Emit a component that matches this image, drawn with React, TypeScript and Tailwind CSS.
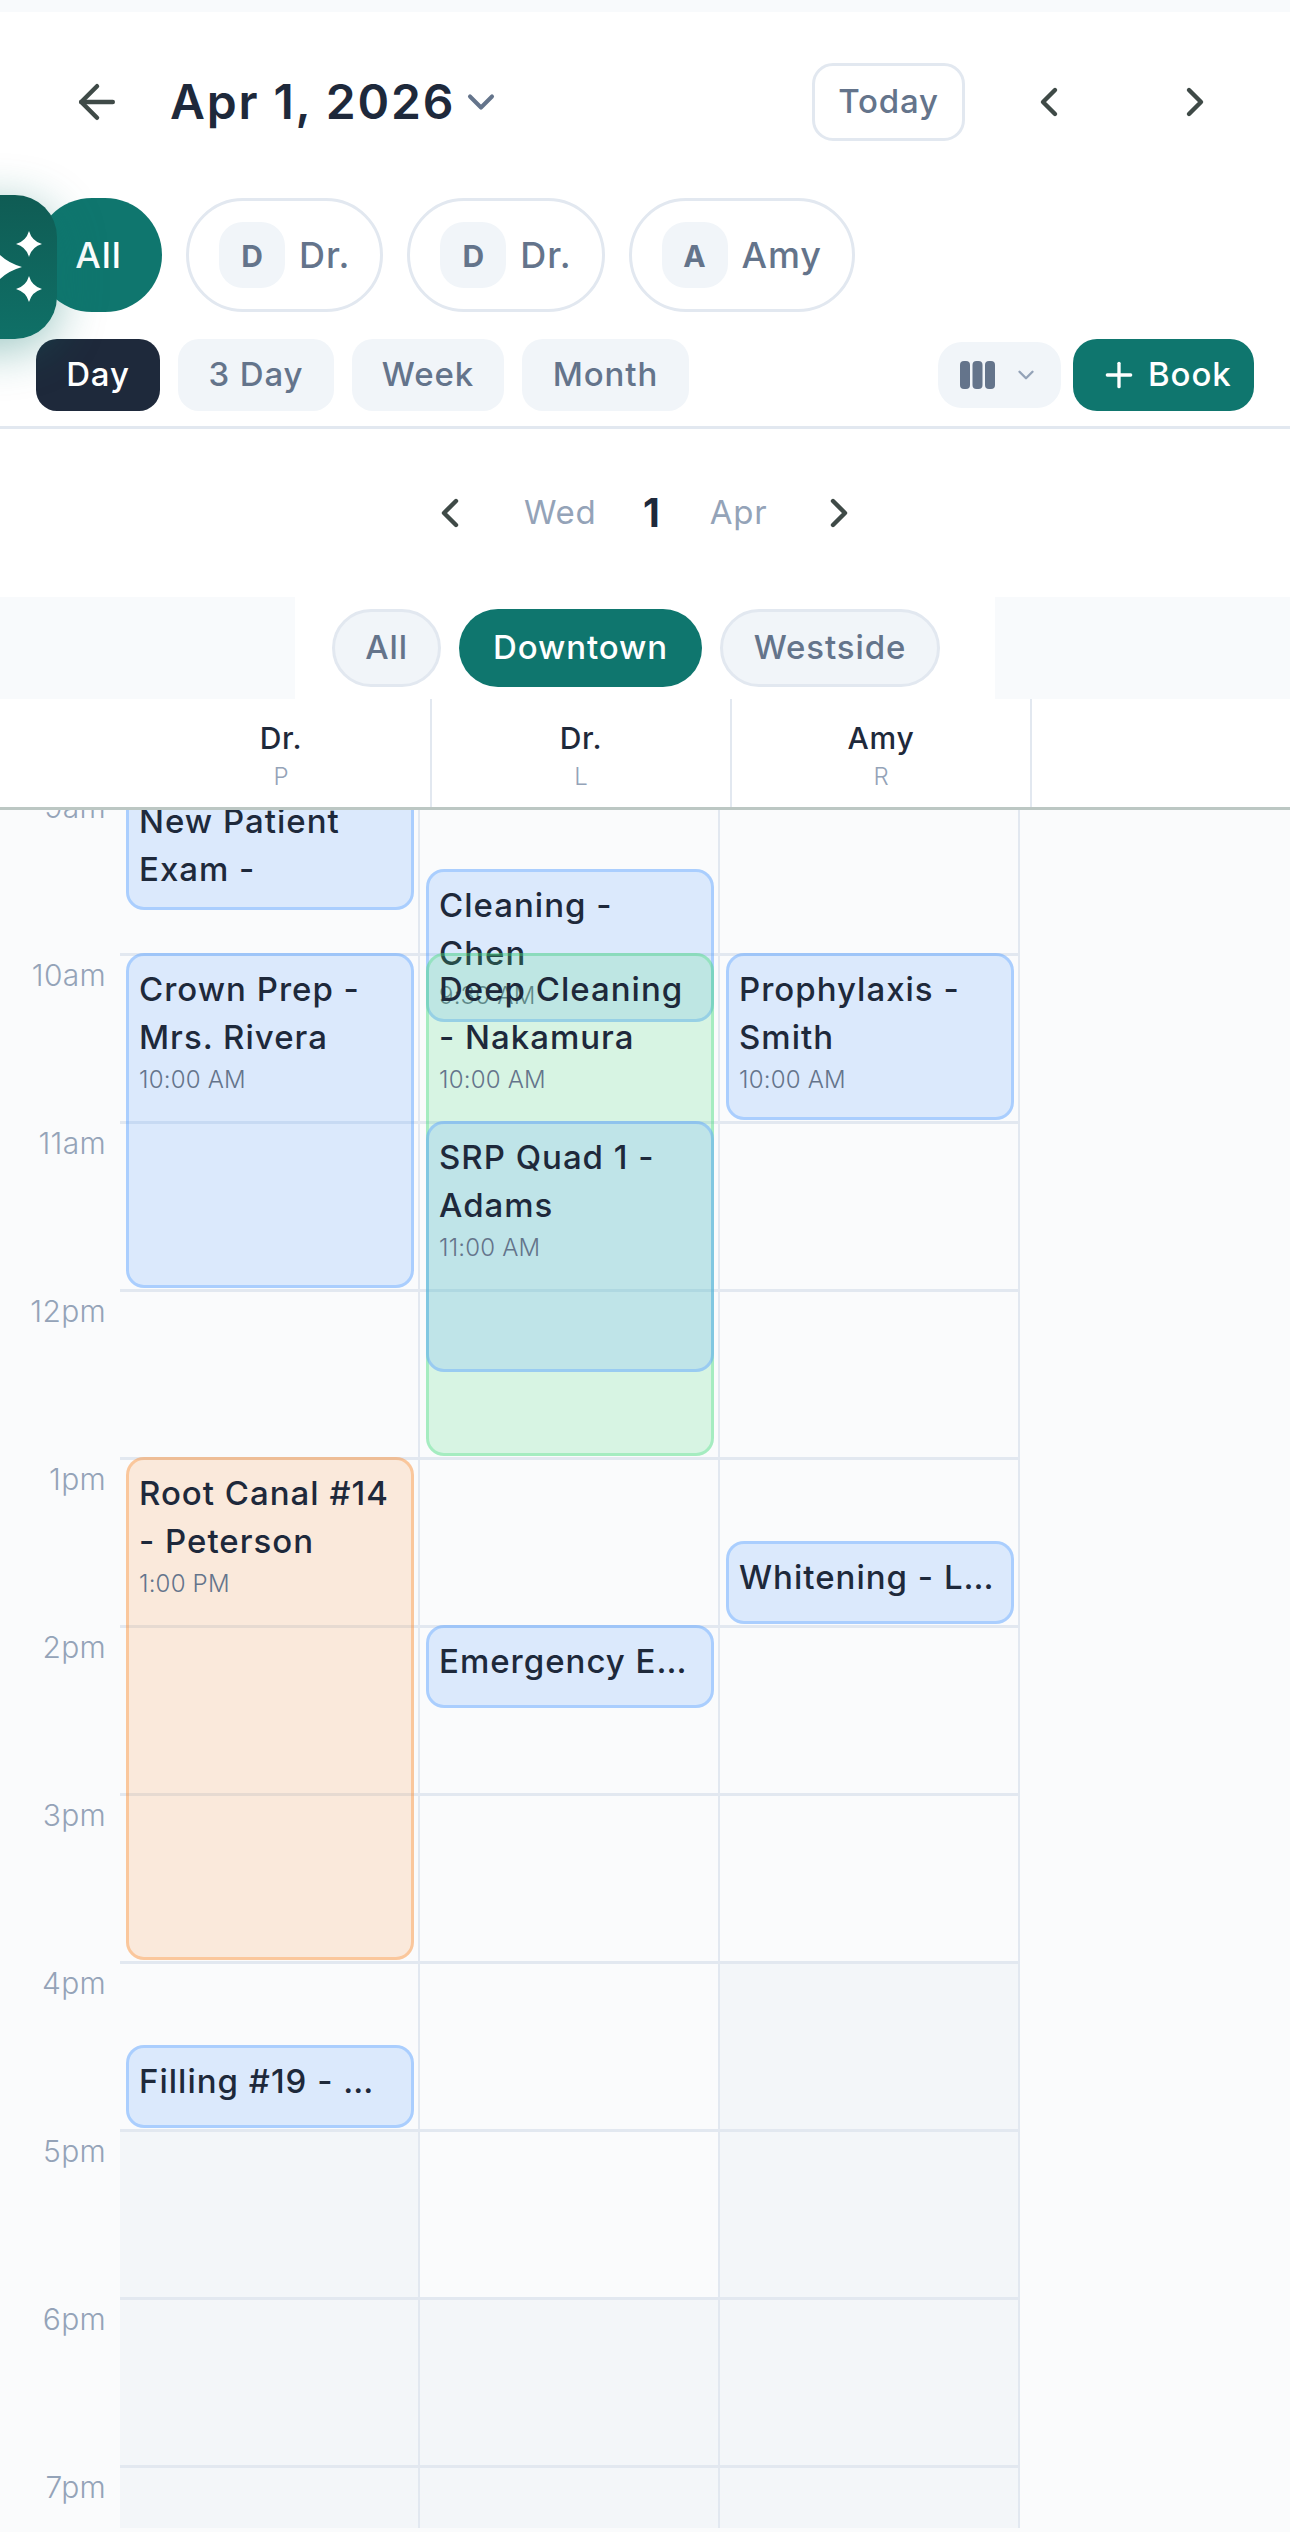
import React from 'react';
import { ArrowLeft, ChevronDown, ChevronLeft, ChevronRight, Plus } from 'lucide-react';

type Tone = 'blue' | 'green' | 'orange';

interface CalEvent {
  title: string;
  time?: string;
  top: number;
  height: number;
  tone: Tone;
  nowrap?: boolean;
}

const HOURS = ['9am', '10am', '11am', '12pm', '1pm', '2pm', '3pm', '4pm', '5pm', '6pm', '7pm'];

const toneClass: Record<Tone, string> = {
  blue: 'bg-[#60a5ff]/20 border-[#60a5ff]/40',
  green: 'bg-[#4ade80]/20 border-[#4ade80]/35',
  orange: 'bg-[#fb923c]/[0.17] border-[#fb923c]/40',
};

const columns: { offFrom: number; events: CalEvent[] }[] = [
  {
    offFrom: 8,
    events: [
      { title: 'New Patient Exam -', top: 0, height: 126, tone: 'blue' },
      { title: 'Crown Prep - Mrs. Rivera', time: '10:00 AM', top: 168, height: 336, tone: 'blue' },
      { title: 'Root Canal #14 - Peterson', time: '1:00 PM', top: 672, height: 504, tone: 'orange' },
      { title: 'Filling #19 - Wong', top: 1260, height: 84, tone: 'blue', nowrap: true },
    ],
  },
  {
    offFrom: 9,
    events: [
      { title: 'Cleaning - Chen', time: '9:30 AM', top: 84, height: 154, tone: 'blue' },
      { title: 'Deep Cleaning - Nakamura', time: '10:00 AM', top: 168, height: 504, tone: 'green' },
      { title: 'SRP Quad 1 - Adams', time: '11:00 AM', top: 336, height: 252, tone: 'blue' },
      { title: 'Emergency Exam - Patel', top: 840, height: 84, tone: 'blue', nowrap: true },
    ],
  },
  {
    offFrom: 7,
    events: [
      { title: 'Prophylaxis - Smith', time: '10:00 AM', top: 168, height: 168, tone: 'blue' },
      { title: 'Whitening - Lopez', top: 756, height: 84, tone: 'blue', nowrap: true },
    ],
  },
];

// four point star with concave sides, same shape as the assistant button glyphs
const Sparkle = ({ cx, cy, r }: { cx: number; cy: number; r: number }) => {
  const k = r * 0.22;
  return (
    <path
      d={`M${cx} ${cy - r}Q${cx + k} ${cy - k} ${cx + r} ${cy}Q${cx + k} ${cy + k} ${cx} ${cy + r}Q${cx - k} ${cy + k} ${cx - r} ${cy}Q${cx - k} ${cy - k} ${cx} ${cy - r}Z`}
      fill="#fff"
    />
  );
};

const ProviderChip = ({ initial, label }: { initial: string; label: string }) => (
  <div className="flex h-[114px] items-center gap-[14px] rounded-[57px] border-[3px] border-[#e2e8f0] pl-[30px] pr-[30px]">
    <div className="flex h-[66px] w-[66px] items-center justify-center rounded-[24px] bg-[#f1f5f9] pt-[3px] text-[30px] font-bold text-[#64748b]">{initial}</div>
    <span className="text-[36px] font-medium tracking-[0.9px] text-[#64748b]">{label}</span>
  </div>
);

const ViewTab = ({ label, width, active }: { label: string; width: string; active?: boolean }) => (
  <div className={`flex h-[72px] items-center justify-center rounded-[21px] text-[33px] font-medium tracking-[0.9px] ${width} ${active ? 'bg-[#1e293b] text-white' : 'bg-[#f1f5f9] text-[#64748b]'}`}>{label}</div>
);

const LocationPill = ({ label, width, active }: { label: string; width: string; active?: boolean }) => (
  <div className={`flex h-[78px] items-center justify-center rounded-[39px] text-[33px] font-medium tracking-[0.9px] ${width} ${active ? 'bg-[#0f766e] text-white' : 'border-[3px] border-[#e2e8f0] bg-[#f1f5f9] text-[#64748b]'}`}>{label}</div>
);

const ColumnHead = ({ name, sub }: { name: string; sub: string }) => (
  <div className="flex w-[300px] flex-col items-center border-r-[2px] border-[#e2e8f0] pt-[19px]">
    <span className="text-[30px] font-medium leading-[40px] tracking-[0.7px] text-[#1e293b]">{name}</span>
    <span className="text-[24px] font-light leading-[38px] text-[#94a3b8]">{sub}</span>
  </div>
);

const EventCard = ({ ev }: { ev: CalEvent }) => (
  <div
    className={`absolute left-[6px] w-[288px] overflow-hidden rounded-[18px] border-[3px] px-[10px] pt-[9px] ${toneClass[ev.tone]}`}
    style={{ top: ev.top, height: ev.height - 1 }}
  >
    <div className={`text-[33px] font-medium leading-[48px] tracking-[1px] text-[#1e293b] ${ev.nowrap ? 'truncate' : ''}`}>{ev.title}</div>
    {ev.time && <div className="mt-[3px] text-[24px] font-light leading-[32px] tracking-[0.2px] text-[#64748b]">{ev.time}</div>}
  </div>
);

const App: React.FC = () => {
  return (
    <div className="flex h-[2532px] w-[1290px] flex-col overflow-hidden bg-white font-['Inter',sans-serif]">
      <div className="h-[12px] shrink-0 bg-[#f8fafc]" />

      {/* top toolbar */}
      <header className="relative shrink-0 border-b-[3px] border-[#e2e8f0] pb-[15px]">
        <div className="flex h-[180px] items-center pl-[70px] pr-[71px]">
          <ArrowLeft size={54} strokeWidth={2} className="text-[#3f4a47]" />
          <span className="ml-[46px] text-[48px] font-semibold tracking-[1.85px] text-[#1e293b]">Apr 1, 2026</span>
          <ChevronDown size={44} strokeWidth={2.2} className="ml-[4px] text-[#64748b]" />
          <div className="ml-auto flex h-[78px] w-[153px] items-center justify-center rounded-[21px] border-[3px] border-[#e2e8f0] text-[33px] font-medium tracking-[0.8px] text-[#64748b]">Today</div>
          <ChevronLeft size={48} strokeWidth={2.2} className="ml-[60px] text-[#3f4a47]" />
          <ChevronRight size={48} strokeWidth={2.2} className="ml-[98px] text-[#3f4a47]" />
        </div>

        <div className="mt-[6px] flex h-[114px] items-center gap-[24px] pl-[35px]">
          <div className="flex h-[114px] w-[127px] items-center justify-center rounded-[57px] bg-[#0f766e] text-[36px] font-medium tracking-[0.9px] text-white">All</div>
          <ProviderChip initial="D" label="Dr." />
          <ProviderChip initial="D" label="Dr." />
          <ProviderChip initial="A" label="Amy" />
        </div>

        <div className="mt-[27px] flex h-[72px] items-center gap-[18px] pl-[36px] pr-[36px]">
          <ViewTab label="Day" width="w-[124px]" active />
          <ViewTab label="3 Day" width="w-[156px]" />
          <ViewTab label="Week" width="w-[152px]" />
          <ViewTab label="Month" width="w-[167px]" />
          <div className="ml-auto flex h-[66px] w-[123px] items-center gap-[18px] rounded-[24px] bg-[#f1f5f9] pl-[22px]">
            <svg width="35" height="28" viewBox="0 0 35 28" fill="#64748b">
              <rect x="0" width="10" height="28" rx="4" />
              <rect x="12.5" width="10" height="28" rx="4" />
              <rect x="25" width="10" height="28" rx="4" />
            </svg>
            <ChevronDown size={26} strokeWidth={2.2} className="text-[#94a3b8]" />
          </div>
          <div className="ml-[-6px] flex h-[72px] w-[181px] items-center gap-[9px] rounded-[24px] bg-[#0f766e] pl-[26px] text-[33px] font-medium tracking-[0.9px] text-white">
            <Plus size={40} strokeWidth={2} />
            Book
          </div>
        </div>

        {/* floating assistant button */}
        <div className="absolute left-[-87px] top-[183px] flex h-[144px] w-[144px] items-center justify-center rounded-[42px] bg-gradient-to-b from-[#0f5c54] to-[#0f7067] shadow-[0_10px_48px_rgba(15,118,110,0.42)]">
          <svg width="144" height="144" viewBox="0 0 144 144">
            <Sparkle cx={116} cy={49} r={13} />
            <Sparkle cx={116} cy={94} r={13} />
            <Sparkle cx={73} cy={72} r={36} />
          </svg>
        </div>
      </header>

      {/* day picker */}
      <div className="flex h-[168px] shrink-0 items-center pl-[426px]">
        <ChevronLeft size={48} strokeWidth={2.2} className="text-[#3f4a47]" />
        <span className="ml-[50px] w-[119px] text-[33px] tracking-[0.7px] text-[#94a3b8]">Wed</span>
        <span className="text-[39px] font-bold text-[#1e293b]">1</span>
        <span className="ml-[50px] text-[33px] tracking-[0.7px] text-[#94a3b8]">Apr</span>
        <ChevronRight size={48} strokeWidth={2.2} className="ml-[48px] text-[#3f4a47]" />
      </div>

      {/* location filter */}
      <div className="flex h-[102px] shrink-0 bg-[#f8fafc]">
        <div className="ml-[295px] flex w-[700px] items-center gap-[18px] bg-white pl-[37px]">
          <LocationPill label="All" width="w-[109px]" />
          <LocationPill label="Downtown" width="w-[243px]" active />
          <LocationPill label="Westside" width="w-[220px]" />
        </div>
      </div>

      {/* provider column heads */}
      <div className="flex h-[111px] shrink-0 border-b-[3px] border-[#bcc7c3] pl-[132px]">
        <ColumnHead name="Dr." sub="P" />
        <ColumnHead name="Dr." sub="L" />
        <ColumnHead name="Amy" sub="R" />
      </div>

      {/* schedule grid */}
      <div className="min-h-0 flex-1 overflow-hidden bg-[#fafbfc]">
        <div className="mt-[-25px] flex">
          <div className="w-[120px] shrink-0">
            {HOURS.map((h) => (
              <div key={h} className="h-[168px] pr-[14px] pt-[2px] text-right text-[30px] font-light leading-[40px] tracking-[0.3px] text-[#94a3b8]">{h}</div>
            ))}
          </div>
          {columns.map((col, i) => (
            <div key={i} className="relative w-[300px] shrink-0 border-r-[2px] border-[#e2e8f0]">
              {HOURS.map((h, idx) => (
                <div key={h} className={`h-[168px] border-t-[3px] border-[#e2e8f0] ${idx >= col.offFrom ? 'bg-[#f3f6f9]' : ''}`} />
              ))}
              {col.events.map((ev) => (
                <EventCard key={ev.title} ev={ev} />
              ))}
            </div>
          ))}
        </div>
      </div>
      <div className="h-[4px] shrink-0 bg-[#fafbfc]" />
    </div>
  );
};

export default App;
